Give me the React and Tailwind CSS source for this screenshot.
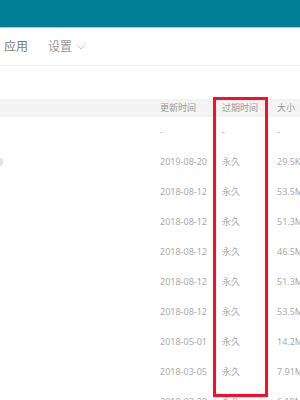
import React from "react";

const rows = [
  ["-", "-", "-"],
  ["2019-08-20", "永久", "29.5KB"],
  ["2018-08-12", "永久", "53.5MB"],
  ["2018-08-12", "永久", "51.3MB"],
  ["2018-08-12", "永久", "46.5MB"],
  ["2018-08-12", "永久", "51.3MB"],
  ["2018-08-12", "永久", "53.5MB"],
  ["2018-05-01", "永久", "14.2MB"],
  ["2018-03-05", "永久", "7.91MB"],
  ["2018-02-28", "永久", "6.10MB"],
];

export default function App() {
  return (
    <div
      className="relative w-[300px] h-[400px] overflow-hidden bg-white"
      style={{ fontFamily: '"Noto Sans", "Noto Sans CJK SC", sans-serif' }}
    >
      <div className="h-[27px] bg-[#027f96]" />
      <div className="h-px bg-[#9fd0da]" />
      <div className="h-[38px] flex items-center border-b border-[#f2f2f2] text-[12px] text-[#7a7a7a]">
        <span className="ml-[4px]">应用</span>
        <span className="ml-[20px] text-[#999]">设置</span>
        <svg className="ml-[5px] mt-[1px]" width="8" height="5" viewBox="0 0 8 5" fill="none">
          <path d="M0.5 0.5 L4 4 L7.5 0.5" stroke="#bbb" strokeWidth="0.9" />
        </svg>
      </div>
      <div className="h-[33px]" />
      <div className="h-[18px] bg-[#f3f3f3] grid grid-cols-[160px_62px_55px_1fr] items-center text-[9px] text-[#999] whitespace-nowrap">
        <span />
        <span>更新时间</span>
        <span>过期时间</span>
        <span>大小</span>
      </div>
      {rows.map((r, i) => (
        <div
          key={i}
          className="h-[30px] grid grid-cols-[160px_62px_55px_1fr] items-center text-[9px] text-[#aaa] whitespace-nowrap"
        >
          <span className="flex">
            {i === 1 && <span className="w-[3px] h-[8px] bg-[#e2e2e2] rounded-r-sm" />}
          </span>
          <span>{r[0]}</span>
          <span>{r[1]}</span>
          <span>{r[2]}</span>
        </div>
      ))}
      <div className="absolute left-[213px] top-[97px] w-[55px] h-[300px] border-[3px] border-[#ff0a2a]" />
    </div>
  );
}
